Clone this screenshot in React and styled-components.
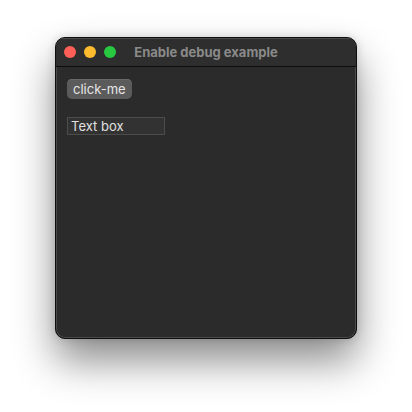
import React from "react";
import styled, { createGlobalStyle } from "styled-components";

const Global = createGlobalStyle`
  html, body { margin: 0; padding: 0; background: #ffffff; }
  body { width: 412px; height: 412px; overflow: hidden; font-family: "Inter", "Liberation Sans", sans-serif; }
`;

const Page = styled.div`
  width: 412px;
  height: 412px;
  display: flex;
  justify-content: center;
  align-items: flex-start;
  padding-top: 37px;
  box-sizing: border-box;
`;

const Window = styled.div`
  width: 302px;
  height: 302px;
  box-sizing: border-box;
  border: 1px solid #0e0e0e;
  border-radius: 10px;
  background: #2b2b2b;
  box-shadow: inset 0 0 0 1px #4a4a4a, 0 22px 40px rgba(0, 0, 0, 0.45), 0 0 10px rgba(0,0,0,0.15);
  display: flex;
  flex-direction: column;
  overflow: hidden;
`;

const TitleBar = styled.div`
  height: 28px;
  flex: none;
  display: flex;
  align-items: center;
  position: relative;
  background: #2e2e2e;
  border-bottom: 1px solid #0c0c0c;
  padding-left: 8px;
  box-shadow: inset 0 1px 0 #4a4a4a;
`;

const Lights = styled.div`
  display: flex;
  gap: 8px;
`;

const Light = styled.span`
  width: 12px;
  height: 12px;
  border-radius: 50%;
  background: ${(p) => p.$c};
`;

const Title = styled.div`
  position: absolute;
  left: 0;
  right: 0;
  text-align: center;
  font-family: "Inter", "Liberation Sans", sans-serif;
  font-weight: 700;
  font-size: 13px;
  color: #8a8a8a;
  pointer-events: none;
`;

const Body = styled.div`
  flex: 1;
  display: flex;
  flex-direction: column;
  align-items: flex-start;
  padding: 12px 11px;
  gap: 18px;
`;

const Button = styled.button`
  height: 20px;
  padding: 0 6px;
  border: none;
  border-radius: 5px;
  background: #5b5b5b;
  color: #e6e6e6;
  font-family: "Inter", "Liberation Sans", sans-serif;
  font-size: 13px;
  line-height: 20px;
  box-shadow: inset 0 1px 0 #6a6a6a;
`;

const TextBox = styled.input`
  width: 98px;
  height: 18px;
  box-sizing: border-box;
  border: 1px solid #4c4c4c;
  background: #323232;
  color: #e0e0e0;
  font-family: "Inter", "Liberation Sans", sans-serif;
  font-size: 13px;
  padding: 0 3px;
  outline: none;
`;

export default function App() {
  return (
    <>
      <Global />
      <Page>
        <Window>
          <TitleBar>
            <Lights>
              <Light $c="#fe5f57" />
              <Light $c="#febc2e" />
              <Light $c="#28c840" />
            </Lights>
            <Title>Enable debug example</Title>
          </TitleBar>
          <Body>
            <Button>click-me</Button>
            <TextBox defaultValue="Text box" />
          </Body>
        </Window>
      </Page>
    </>
  );
}
